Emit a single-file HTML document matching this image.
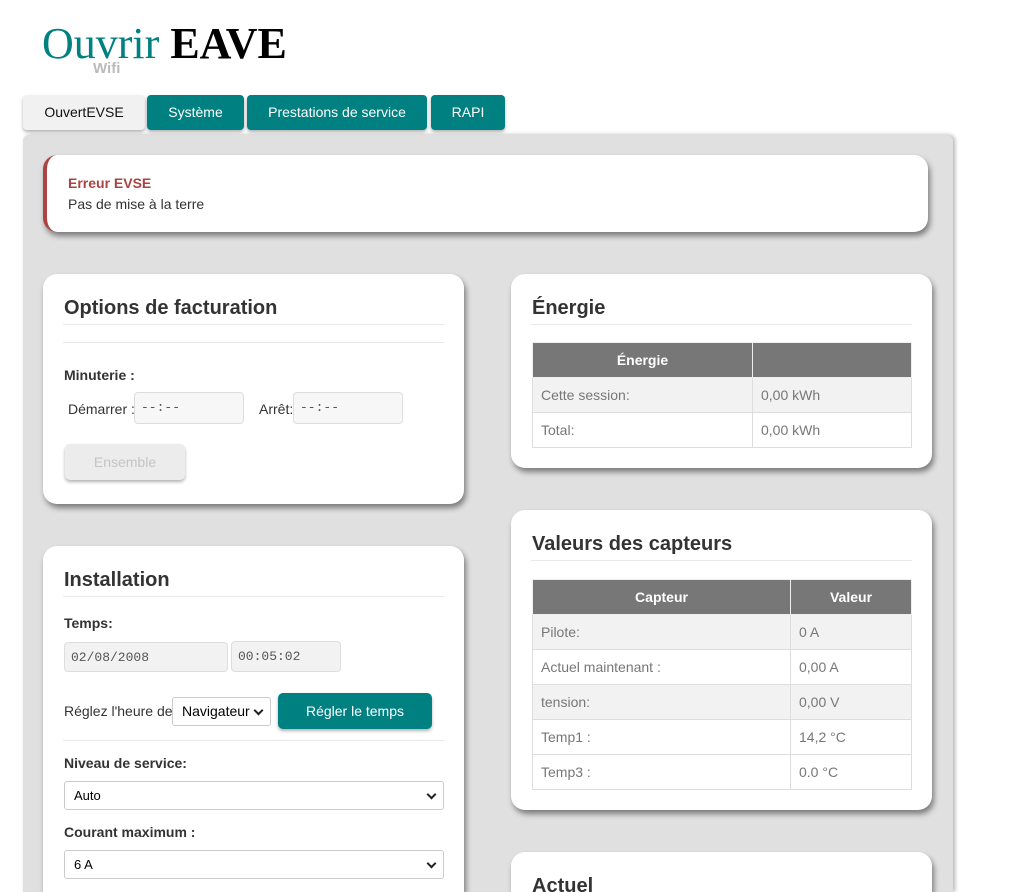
<!DOCTYPE html>
<html style="width:1017px;height:892px;overflow:hidden"><head><meta charset="utf-8"><style>
*{box-sizing:border-box}
body{margin:0;width:1017px;height:892px;overflow:hidden;background:#fff;font-family:"Liberation Sans",Arial,sans-serif;color:#333;position:relative}
.abs{position:absolute}
.logo{left:42px;top:19px;font-family:"Liberation Serif",serif;font-size:44px;color:#008080;line-height:50px;white-space:nowrap}
.logo b{color:#000}
.wifi{left:93px;top:60px;font-size:15px;font-weight:bold;color:#bbb}
.tab{top:95px;height:35px;border-radius:4px;font-size:14px;text-align:center;line-height:34px;color:#fff;background:#008080;box-shadow:0 2px 3px rgba(0,0,0,.3)}
.panel{left:23px;top:135px;width:930px;height:757px;background:#e0e0e0;border-radius:6px 6px 0 0;box-shadow:2px 0 4px rgba(0,0,0,.3)}
.card{background:#fff;border-radius:14px;box-shadow:2px 4px 6px rgba(0,0,0,.45)}
h2{margin:0;font-size:20px;font-weight:bold;color:#333;position:absolute;left:21px}
.hr{position:absolute;left:20px;right:20px;height:1px;background:#e8e8e8}
.lbl{font-size:14px;font-weight:bold;color:#333;position:absolute}
.txt{font-size:14px;color:#333;position:absolute;white-space:nowrap}
.inp{position:absolute;border:1px solid #ddd;border-radius:4px;background:#f7f7f7;font-family:"Liberation Mono",monospace;font-size:13px;color:#555;padding-left:6px;line-height:30px}
.sel{position:absolute;border:1px solid #ccc;border-radius:3px;background:#fff;font-size:13px;color:#000;padding-left:9px;line-height:27px}
.sel:after{content:"";position:absolute;right:8px;top:9px;width:5px;height:5px;border-right:2px solid #222;border-bottom:2px solid #222;transform:rotate(45deg)}
table{position:absolute;left:21px;width:380px;border-collapse:collapse;font-size:14px;color:#777}
td,th{border:1px solid #ddd;height:35px;padding:0 8px}
th{background:#777;color:#fff;font-weight:bold;text-align:center;border-color:#eee}
tr.g td{background:#f2f2f2}
</style></head><body>
<div class="abs logo">Ouvrir <b>EAVE</b></div>
<div class="abs wifi">Wifi</div>
<div class="abs tab" style="left:23px;width:122px;background:#f1f1f1;color:#111">OuvertEVSE</div>
<div class="abs tab" style="left:147px;width:97px">Système</div>
<div class="abs tab" style="left:247px;width:180px">Prestations de service</div>
<div class="abs tab" style="left:431px;width:74px">RAPI</div>
<div class="abs panel"></div>

<div class="abs card" style="left:43px;top:155px;width:885px;height:77px;border-left:4px solid #a94442">
<div class="txt" style="left:21px;top:20px;font-weight:bold;color:#a94442">Erreur EVSE</div>
<div class="txt" style="left:21px;top:41px">Pas de mise à la terre</div>
</div>

<div class="abs card" style="left:43px;top:274px;width:421px;height:230px">
<h2 style="top:23px">Options de facturation</h2>
<div class="hr" style="top:50px"></div><div class="hr" style="top:68px"></div>
<div class="lbl" style="left:21px;top:93px">Minuterie :</div>
<div class="txt" style="left:25px;top:127px">Démarrer :</div>
<div class="inp" style="left:91px;top:118px;width:110px;height:32px">--:--</div>
<div class="txt" style="left:216px;top:127px">Arrêt:</div>
<div class="inp" style="left:250px;top:118px;width:110px;height:32px">--:--</div>
<div class="abs" style="left:22px;top:170px;width:120px;height:36px;background:#ececec;border-radius:5px;box-shadow:0 2px 3px rgba(0,0,0,.3);color:#c4c4c4;font-size:14px;text-align:center;line-height:36px">Ensemble</div>
</div>

<div class="abs card" style="left:43px;top:546px;width:421px;height:346px;border-radius:14px 14px 0 0">
<h2 style="top:23px">Installation</h2>
<div class="hr" style="top:50px"></div>
<div class="lbl" style="left:21px;top:69px">Temps:</div>
<div class="inp" style="left:21px;top:96px;width:164px;height:30px;background:#f2f2f2">02/08/2008</div>
<div class="inp" style="left:188px;top:95px;width:110px;height:31px;background:#f2f2f2">00:05:02</div>
<div class="txt" style="left:21px;top:157px">Réglez l'heure de</div>
<div class="sel" style="left:129px;top:151px;width:99px;height:29px;font-size:14px;padding-left:9px">Navigateur</div>
<div class="abs" style="left:235px;top:147px;width:154px;height:36px;background:#008080;border-radius:5px;color:#fff;font-size:14px;text-align:center;line-height:36px;box-shadow:0 2px 3px rgba(0,0,0,.3)">Régler le temps</div>
<div class="hr" style="top:194px"></div>
<div class="lbl" style="left:21px;top:209px">Niveau de service:</div>
<div class="sel" style="left:21px;top:235px;width:380px;height:29px">Auto</div>
<div class="lbl" style="left:21px;top:278px">Courant maximum :</div>
<div class="sel" style="left:21px;top:304px;width:380px;height:29px">6 A</div>
</div>

<div class="abs card" style="left:511px;top:274px;width:421px;height:194px">
<h2 style="top:23px">Énergie</h2>
<div class="hr" style="top:50px"></div>
<table style="top:68px"><tr><th style="width:220px">Énergie</th><th></th></tr>
<tr class="g"><td>Cette session:</td><td>0,00 kWh</td></tr>
<tr><td>Total:</td><td>0,00 kWh</td></tr></table>
</div>

<div class="abs card" style="left:511px;top:510px;width:421px;height:300px">
<h2 style="top:23px">Valeurs des capteurs</h2>
<div class="hr" style="top:50px"></div>
<table style="top:69px"><tr><th style="width:258px">Capteur</th><th>Valeur</th></tr>
<tr class="g"><td>Pilote:</td><td>0 A</td></tr>
<tr><td>Actuel maintenant :</td><td>0,00 A</td></tr>
<tr class="g"><td>tension:</td><td>0,00 V</td></tr>
<tr><td>Temp1 :</td><td>14,2 °C</td></tr>
<tr><td>Temp3 :</td><td>0.0 °C</td></tr></table>
</div>

<div class="abs card" style="left:511px;top:852px;width:421px;height:40px;border-radius:14px 14px 0 0;overflow:hidden">
<h2 style="top:23px">Actuel</h2>
</div>
</body></html>
